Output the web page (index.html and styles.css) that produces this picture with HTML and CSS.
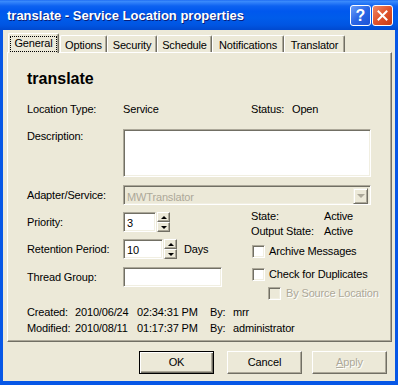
FILE: index.html
```html
<!DOCTYPE html>
<html>
<head>
<meta charset="utf-8">
<title>translate - Service Location properties</title>
<link rel="stylesheet" href="styles.css">
</head>
<body>
<div class="window">
  <div class="titlebar">
    <span class="title">translate - Service Location properties</span>
    <div class="tb-btns">
      <span class="tb-btn help">?</span>
      <span class="tb-btn close"><svg width="13" height="13" viewBox="0 0 13 13"><path d="M2.5 2.5L10.5 10.5M10.5 2.5L2.5 10.5" stroke="#fff" stroke-width="2" stroke-linecap="square"/></svg></span>
    </div>
  </div>
  <div class="frame">
    <div class="client">
      <div class="tabs">
        <div class="tab sel t-general"><span class="focus">General</span></div>
        <div class="tab t-options">Options</div>
        <div class="tab t-security">Security</div>
        <div class="tab t-schedule">Schedule</div>
        <div class="tab t-notif">Notifications</div>
        <div class="tab t-trans">Translator</div>
      </div>
      <div class="panel">
        <div class="heading">translate</div>
        <div class="row row-loc">
          <span class="lbl">Location Type:</span>
          <span class="val-svc">Service</span>
          <span class="status-lbl">Status:</span>
          <span>Open</span>
        </div>
        <div class="row row-desc">
          <span class="lbl desc-lbl">Description:</span>
          <div class="sunken desc-box"></div>
        </div>
        <div class="row frow row-adapter">
          <span class="lbl">Adapter/Service:</span>
          <div class="sunken combo">
            <span class="combo-text">MWTranslator</span>
            <span class="drop"><span class="drop-tri"></span></span>
          </div>
        </div>
        <div class="mid">
          <div class="mid-left">
            <div class="row frow r-priority">
              <span class="lbl">Priority:</span>
              <div class="sunken num num-pri">3</div>
              <div class="spin"><span class="sbtn"><span class="tri-up"></span></span><span class="sbtn"><span class="tri-down"></span></span></div>
            </div>
            <div class="row frow r-ret">
              <span class="lbl">Retention Period:</span>
              <div class="sunken num num-ret">10</div>
              <div class="spin"><span class="sbtn"><span class="tri-up"></span></span><span class="sbtn"><span class="tri-down"></span></span></div>
              <span class="days">Days</span>
            </div>
            <div class="row frow r-thread">
              <span class="lbl">Thread Group:</span>
              <div class="sunken thread"></div>
            </div>
          </div>
          <div class="mid-right">
            <div class="state-row s-first"><span class="state-lbl">State:</span><span>Active</span></div>
            <div class="state-row"><span class="state-lbl">Output State:</span><span>Active</span></div>
            <div class="chk-row c-archive"><span class="sunken chk"></span><span class="chk-lbl">Archive Messages</span></div>
            <div class="chk-row c-dup"><span class="sunken chk"></span><span class="chk-lbl">Check for Duplicates</span></div>
            <div class="chk-row c-src"><span class="sunken chk chk-dis"></span><span class="chk-lbl dis">By Source Location</span></div>
          </div>
        </div>
        <div class="info">
          <div class="info-row"><span class="i1">Created:</span><span class="i2">2010/06/24</span><span class="i3">02:34:31 PM</span><span class="i4">By:</span><span>mrr</span></div>
          <div class="info-row"><span class="i1">Modified:</span><span class="i2">2010/08/11</span><span class="i3">01:17:37 PM</span><span class="i4">By:</span><span>administrator</span></div>
        </div>
      </div>
      <div class="buttons">
        <div class="btn btn-default">OK</div>
        <div class="btn b-cancel">Cancel</div>
        <div class="btn b-apply dis"><u>A</u>pply</div>
      </div>
    </div>
  </div>
</div>
</body>
</html>
```
FILE: styles.css
```css
* { box-sizing: border-box; }
body {
  margin: 0;
  background: #fff;
  font-family: "Liberation Sans", Arial, sans-serif;
  font-size: 11px;
  letter-spacing: -0.15px;
  color: #000;
}
.window {
  width: 398px;
  height: 385px;
  display: flex;
  flex-direction: column;
}
.titlebar {
  height: 30px;
  flex: none;
  display: flex;
  align-items: flex-start;
  padding-left: 7px;
  background: linear-gradient(to bottom, #1461ef 0px, #3d8dfc 1px, #2b7cf8 3px, #0d62f1 6px, #0058ee 11px, #005ceb 18px, #0055e2 25px, #0049cf 30px);
}
.title {
  flex: 1;
  color: #fff;
  font-weight: bold;
  font-size: 13px;
  letter-spacing: 0;
  line-height: 28px;
  padding-top: 2px;
  white-space: nowrap;
  text-shadow: 1px 1px #0a1e78;
}
.tb-btns {
  display: flex;
  gap: 1px;
  margin-top: 5px;
  margin-right: 5px;
}
.tb-btn {
  width: 21px;
  height: 21px;
  border: 1px solid #fff;
  border-radius: 3px;
  display: flex;
  align-items: center;
  justify-content: center;
}
.help {
  background: linear-gradient(135deg, #6b9ef8 0%, #2a66e6 50%, #1c52d6 100%);
  color: #fff;
  font-weight: bold;
  font-size: 16px;
  line-height: 19px;
  letter-spacing: 0;
}
.close {
  background: linear-gradient(135deg, #f08a68 0%, #e0532c 50%, #c83a14 100%);
}
.frame {
  flex: 1;
  display: flex;
  border-style: solid;
  border-color: #0757e6;
  border-width: 0 3px 4px 3px;
}
.client {
  flex: 1;
  background: #ece9d8;
  display: flex;
  flex-direction: column;
}
.tabs {
  height: 22px;
  flex: none;
  display: flex;
  align-items: flex-end;
  padding-left: 5px;
  position: relative;
  z-index: 1;
}
.tab {
  height: 17px;
  border: 1px solid;
  border-color: #fff #716f64 transparent #fff;
  border-bottom: none;
  border-radius: 2px 2px 0 0;
  box-shadow: inset -1px 0 #aca899;
  text-align: center;
  padding-top: 1px;
  line-height: 16px;
  white-space: nowrap;
  background: #ece9d8;
}
.tab.sel {
  height: 20px;
  margin-bottom: -1px;
  padding: 0;
}
.focus {
  display: block;
  margin: 2px 1px 0 1px;
  height: 16px;
  border: 1px dotted #000;
  line-height: 12px;
}
.t-general { width: 51px; }
.t-options { width: 47px; margin-left: 1px; }
.t-security { width: 50px; }
.t-schedule { width: 55px; }
.t-notif { width: 72px; }
.t-trans { width: 61px; }
.panel {
  height: 290px;
  flex: none;
  margin: 0 3px 0 4px;
  border: 1px solid;
  border-color: #fff #716f64 #716f64 #fff;
  box-shadow: inset -1px -1px #aca899;
  padding: 16px 0 0 19px;
}
.heading {
  font-size: 16px;
  font-weight: bold;
  letter-spacing: 0;
  line-height: 19px;
}
.row {
  display: flex;
  line-height: 13px;
}
.lbl {
  width: 96px;
  flex: none;
}
.row-loc { margin-top: 15px; }
.val-svc { width: 128px; }
.status-lbl { width: 41px; }
.row-desc { margin-top: 13px; }
.desc-lbl { padding-top: 1px; }
.sunken {
  border: 1px solid;
  border-color: #aca899 #fff #fff #aca899;
  box-shadow: inset 1px 1px #716f64, inset -1px -1px #f1efe2;
  background: #fff;
}
.desc-box {
  width: 248px;
  height: 48px;
}
.frow {
  height: 20px;
  align-items: center;
}
.frow .lbl { padding-top: 1px; }
.row-adapter { margin-top: 8px; }
.combo {
  width: 248px;
  height: 20px;
  background: #ece9d8;
  display: flex;
  justify-content: space-between;
  padding: 2px;
}
.combo-text {
  color: #aca899;
  line-height: 16px;
  padding-top: 1px;
  padding-left: 1px;
}
.drop {
  width: 15px;
  height: 16px;
  border: 1px solid;
  border-color: #f1efe2 #716f64 #716f64 #f1efe2;
  box-shadow: inset 1px 1px #fff, inset -1px -1px #aca899;
  display: flex;
  align-items: center;
  justify-content: center;
}
.drop-tri {
  width: 0;
  height: 0;
  border-left: 4px solid transparent;
  border-right: 4px solid transparent;
  border-top: 4px solid #aca899;
}
.mid { display: flex; }
.mid-left { width: 224px; flex: none; }
.mid-right { flex: 1; }
.r-priority { margin-top: 7px; }
.r-ret { margin-top: 7px; }
.r-thread { margin-top: 8px; }
.num {
  height: 20px;
  line-height: 16px;
  padding: 2px 0 0 3px;
}
.num-pri { width: 33px; }
.num-ret { width: 40px; }
.spin {
  display: flex;
  flex-direction: column;
  margin-left: 1px;
  height: 20px;
}
.sbtn {
  width: 13px;
  height: 10px;
  border: 1px solid;
  border-color: #fff #716f64 #716f64 #fff;
  box-shadow: inset -1px -1px #aca899;
  display: flex;
  align-items: center;
  justify-content: center;
}
.tri-up {
  width: 0;
  height: 0;
  border-left: 3px solid transparent;
  border-right: 3px solid transparent;
  border-bottom: 3px solid #000;
}
.tri-down {
  width: 0;
  height: 0;
  border-left: 3px solid transparent;
  border-right: 3px solid transparent;
  border-top: 3px solid #000;
}
.days { margin-left: 7px; }
.thread {
  width: 99px;
  height: 20px;
}
.state-row {
  display: flex;
  line-height: 15px;
}
.s-first { margin-top: 4px; }
.state-lbl { width: 73px; }
.chk-row {
  display: flex;
  align-items: center;
  height: 13px;
  line-height: 13px;
}
.c-archive { margin-top: 6px; }
.c-dup { margin-top: 10px; }
.c-src { margin-top: 6px; margin-left: 16px; }
.chk {
  width: 13px;
  height: 13px;
  margin-left: 1px;
}
.chk-dis { background: #ece9d8; }
.chk-lbl { margin-left: 4px; }
.c-src .chk-lbl { margin-left: 5px; }
.dis {
  color: #aca899;
  text-shadow: 1px 1px #fff;
}
.info { margin-top: 4px; }
.info-row {
  display: flex;
  line-height: 16px;
}
.i1 { width: 48px; }
.i2 { width: 62px; }
.i3 { width: 73px; }
.i4 { width: 23px; }
.buttons {
  display: flex;
  margin-top: 9px;
  padding-left: 136px;
}
.btn {
  width: 75px;
  height: 23px;
  border: 1px solid;
  border-color: #fff #716f64 #716f64 #fff;
  box-shadow: inset -1px -1px #aca899;
  text-align: center;
  line-height: 21px;
}
.btn-default {
  border-color: #000;
  box-shadow: inset 1px 1px #fff, inset -1px -1px #716f64, inset -2px -2px #aca899;
}
.b-cancel { margin-left: 13px; }
.b-apply { margin-left: 10px; }
.b-apply u { text-decoration: underline; }
```
